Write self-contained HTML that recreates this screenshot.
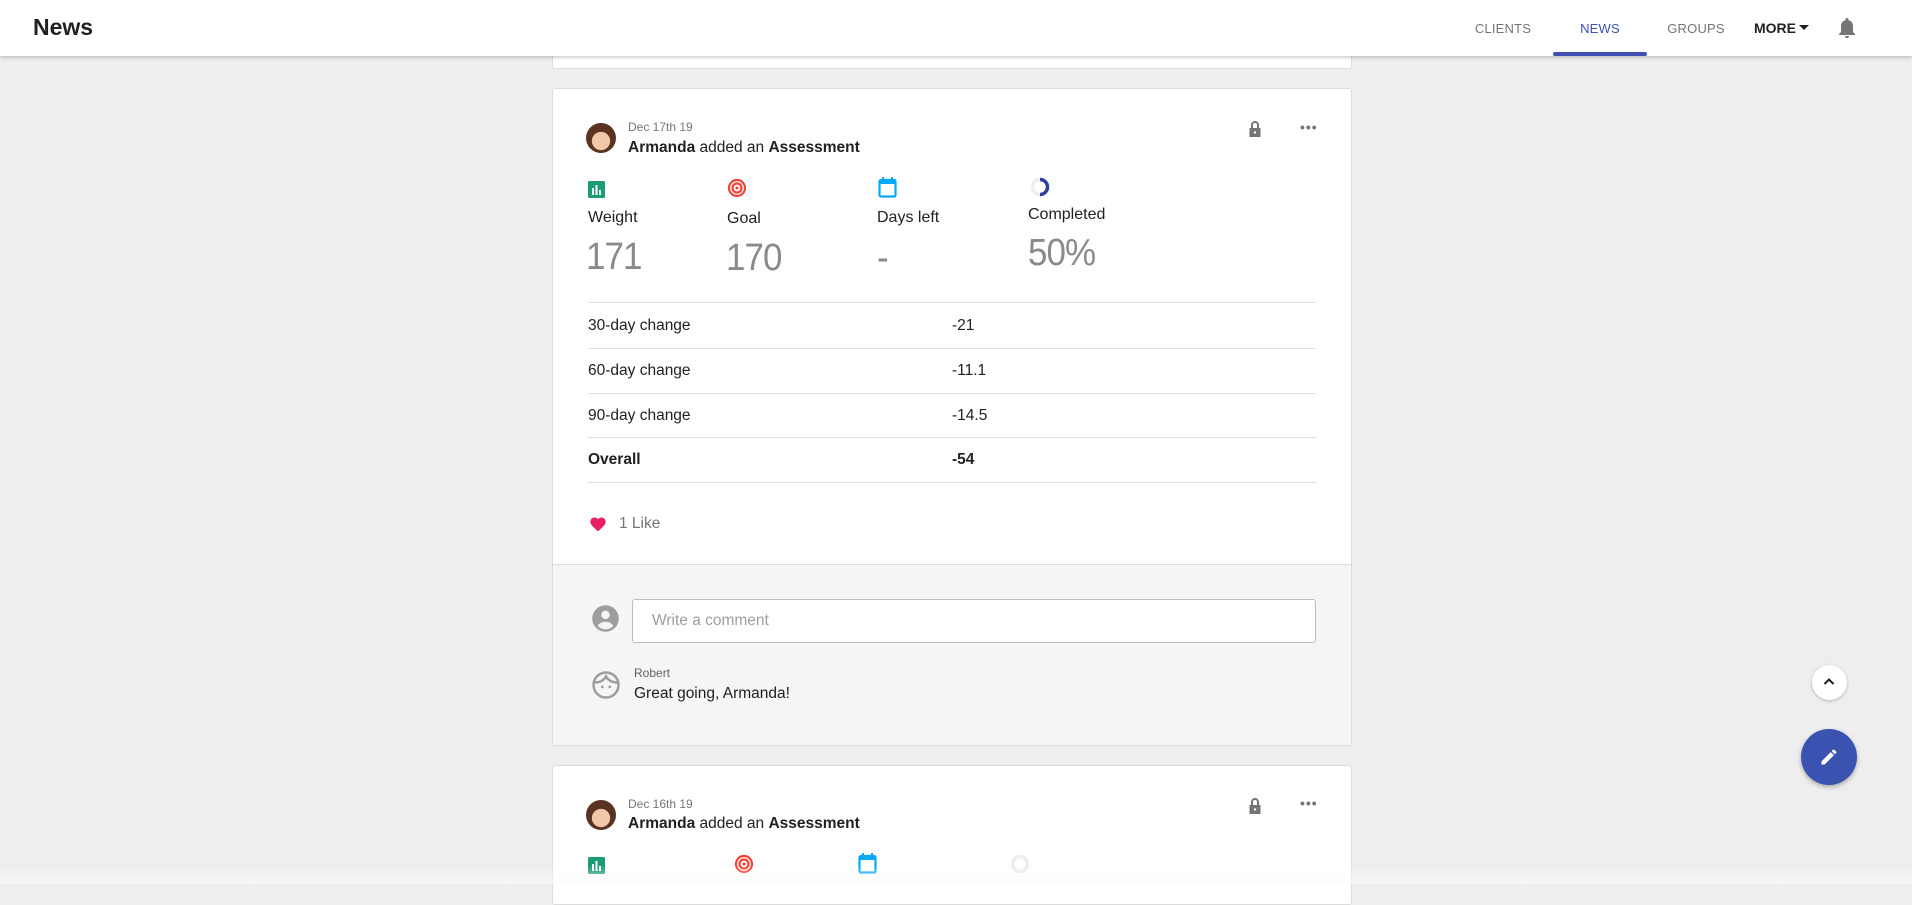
<!DOCTYPE html>
<html><head><meta charset="utf-8"><style>
*{margin:0;padding:0;box-sizing:border-box}
body{width:1912px;height:884px;overflow:hidden;background:#eeeeee;font-family:"Liberation Sans",Roboto,sans-serif;position:relative;color:#212121}
.a{position:absolute}
.hdr{left:0;top:0;width:1912px;height:56px;background:#fff;box-shadow:0 1px 4px rgba(0,0,0,.25);z-index:5}
.nav{font-size:13px;color:#757575;top:21px;transform:translateX(-50%);letter-spacing:.2px}
.card{background:#fff;border:1px solid #dcdcdc;border-radius:3px;left:552px;width:800px}
.lbl{font-size:16px;color:#212121}
.big{font-size:38px;font-weight:normal;color:#8a8a8a;letter-spacing:-1px;transform:scaleX(.92);transform-origin:left}
.line{left:588px;width:728px;height:1px;background:#e0e0e0}
.row{font-size:15.5px;color:#212121}
</style></head><body>
<div class="a hdr">
 <div class="a" style="left:33px;top:14px;font-size:23px;font-weight:bold;color:#212121">News</div>
 <div class="a nav" style="left:1503px">CLIENTS</div>
 <div class="a nav" style="left:1600px;color:#3f51b5">NEWS</div>
 <div class="a nav" style="left:1696px">GROUPS</div>
 <div class="a" style="left:1754px;top:20px;font-size:14px;font-weight:bold;color:#212121">MORE</div>
 <svg class="a" style="left:1798px;top:24px" width="12" height="8"><path d="M1 1h10L6 6z" fill="#212121"/></svg>
 <svg class="a" style="left:1837px;top:17px" width="20" height="22" viewBox="0 0 20 22"><path d="M10 1a1.5 1.5 0 0 1 1.5 1.5v.6C14.3 3.8 16 6.2 16 9v6l2 2v1H2v-1l2-2V9c0-2.8 1.7-5.2 4.5-5.9v-.6A1.5 1.5 0 0 1 10 1zM8 19h4a2 2 0 0 1-4 0z" fill="#757575"/></svg>
 <div class="a" style="left:1553px;top:52px;width:94px;height:4px;background:#3f51b5;border-radius:2px"></div>
</div>

<div class="a card" style="top:40px;height:29px"></div>

<div class="a card" style="top:88px;height:658px;overflow:hidden">
 <div class="a" style="left:0;top:475px;width:800px;height:183px;background:#f5f5f5;border-top:1px solid #dcdcdc"></div>
</div>

<div class="a" style="left:586px;top:123px;width:30px;height:30px;border-radius:50%;background:radial-gradient(circle at 50% 60%,#f1c9a8 0 38%,#5a3322 40%)"></div>
<div class="a" style="left:628px;top:120px;font-size:12px;color:#757575">Dec 17th 19</div>
<div class="a" style="left:628px;top:139px;font-size:15.5px"><b>Armanda</b> added an <b>Assessment</b></div>
<svg class="a" style="left:1248px;top:120px" width="14" height="18" viewBox="0 0 14 18"><path d="M3 8V5a4 4 0 0 1 8 0v3h1.5v9h-11V8zM5 8h4V5a2 2 0 0 0-4 0z" fill="#757575"/><circle cx="7" cy="12.5" r="1.2" fill="#fff"/></svg>
<div class="a" style="left:1300px;top:119px;font-size:14px;color:#757575;letter-spacing:1px;font-weight:bold">•••</div>

<svg class="a" style="left:588px;top:181px" width="17" height="17"><rect width="17" height="17" rx="1.5" fill="#1a9c75"/><rect x="4" y="7" width="2" height="7" fill="#fff"/><rect x="7.5" y="4" width="2" height="10" fill="#fff"/><rect x="11" y="9" width="2" height="5" fill="#fff"/></svg>
<svg class="a" style="left:727px;top:178px" width="20" height="20"><circle cx="10" cy="10" r="8" fill="none" stroke="#f44336" stroke-width="2.2"/><circle cx="10" cy="10" r="4.5" fill="none" stroke="#f44336" stroke-width="2.2"/><circle cx="10" cy="10" r="1.5" fill="#f44336"/></svg>
<svg class="a" style="left:878px;top:176px" width="19" height="22"><rect x="1.5" y="4" width="16" height="16.5" rx="1.5" fill="none" stroke="#03a9f4" stroke-width="2.2"/><rect x="1.5" y="4" width="16" height="4" fill="#03a9f4"/><rect x="4" y="1" width="2" height="4" fill="#03a9f4"/><rect x="13" y="1" width="2" height="4" fill="#03a9f4"/></svg>
<svg class="a" style="left:1030px;top:177px" width="20" height="20"><circle cx="10" cy="10" r="7.5" fill="none" stroke="#eee" stroke-width="3.5"/><path d="M10 2.5a7.5 7.5 0 0 1 0 15" fill="none" stroke="#303f9f" stroke-width="3.5"/></svg>

<div class="a lbl" style="left:588px;top:209px">Weight</div>
<div class="a lbl" style="left:727px;top:210px">Goal</div>
<div class="a lbl" style="left:877px;top:209px">Days left</div>
<div class="a lbl" style="left:1028px;top:206px">Completed</div>
<div class="a big" style="left:586px;top:236px">171</div>
<div class="a big" style="left:726px;top:237px">170</div>
<div class="a big" style="left:877px;top:237px">-</div>
<div class="a big" style="left:1028px;top:232px">50%</div>

<div class="a line" style="top:302px"></div>
<div class="a line" style="top:348px"></div>
<div class="a line" style="top:393px"></div>
<div class="a line" style="top:437px"></div>
<div class="a line" style="top:482px"></div>
<div class="a row" style="left:588px;top:317px">30-day change</div><div class="a row" style="left:952px;top:317px">-21</div>
<div class="a row" style="left:588px;top:362px">60-day change</div><div class="a row" style="left:952px;top:362px">-11.1</div>
<div class="a row" style="left:588px;top:407px">90-day change</div><div class="a row" style="left:952px;top:407px">-14.5</div>
<div class="a row" style="left:588px;top:451px;font-weight:bold">Overall</div><div class="a row" style="left:952px;top:451px;font-weight:bold">-54</div>

<svg class="a" style="left:589px;top:516px" width="18" height="16" viewBox="0 0 24 22"><path d="M12 21l-1.5-1.3C5 15 1.5 11.8 1.5 7.8 1.5 4.6 4 2 7.2 2c1.9 0 3.6.9 4.8 2.3C13.2 2.9 14.9 2 16.8 2 20 2 22.5 4.6 22.5 7.8c0 4-3.5 7.2-9 11.9z" fill="#e91e63"/></svg>
<div class="a" style="left:619px;top:515px;font-size:15.5px;color:#757575">1 Like</div>

<svg class="a" style="left:591px;top:604px" width="29" height="29" viewBox="0 0 24 24"><circle cx="12" cy="12" r="11" fill="#9e9e9e"/><circle cx="12" cy="9" r="3.5" fill="#f5f5f5"/><path d="M5.5 18c1.5-2.3 4-3.3 6.5-3.3s5 1 6.5 3.3A9 9 0 0 1 12 21a9 9 0 0 1-6.5-3z" fill="#f5f5f5"/></svg>
<div class="a" style="left:632px;top:599px;width:684px;height:44px;background:#fff;border:1px solid #bdbdbd;border-radius:3px"></div>
<div class="a" style="left:652px;top:612px;font-size:15.5px;color:#9e9e9e">Write a comment</div>
<svg class="a" style="left:591px;top:670px" width="30" height="30" viewBox="0 0 24 24"><circle cx="12" cy="12" r="10" fill="none" stroke="#9e9e9e" stroke-width="2"/><path d="M3 10c3 0 7-1 9-5 2 4 6 5 9 5" fill="none" stroke="#9e9e9e" stroke-width="2"/><circle cx="9" cy="13.5" r="1.1" fill="#9e9e9e"/><circle cx="15" cy="13.5" r="1.1" fill="#9e9e9e"/></svg>
<div class="a" style="left:634px;top:666px;font-size:12px;color:#616161">Robert</div>
<div class="a" style="left:634px;top:685px;font-size:15.5px;color:#212121">Great going, Armanda!</div>

<div class="a card" style="top:765px;height:140px"></div>
<div class="a" style="left:586px;top:800px;width:30px;height:30px;border-radius:50%;background:radial-gradient(circle at 50% 60%,#f1c9a8 0 38%,#5a3322 40%)"></div>
<div class="a" style="left:628px;top:797px;font-size:12px;color:#757575">Dec 16th 19</div>
<div class="a" style="left:628px;top:815px;font-size:15.5px"><b>Armanda</b> added an <b>Assessment</b></div>
<svg class="a" style="left:1248px;top:797px" width="14" height="18" viewBox="0 0 14 18"><path d="M3 8V5a4 4 0 0 1 8 0v3h1.5v9h-11V8zM5 8h4V5a2 2 0 0 0-4 0z" fill="#757575"/><circle cx="7" cy="12.5" r="1.2" fill="#fff"/></svg>
<div class="a" style="left:1300px;top:795px;font-size:14px;color:#757575;letter-spacing:1px;font-weight:bold">•••</div>
<svg class="a" style="left:588px;top:857px" width="17" height="17"><rect width="17" height="17" rx="1.5" fill="#1a9c75"/><rect x="4" y="7" width="2" height="7" fill="#fff"/><rect x="7.5" y="4" width="2" height="10" fill="#fff"/><rect x="11" y="9" width="2" height="5" fill="#fff"/></svg>
<svg class="a" style="left:734px;top:854px" width="20" height="20"><circle cx="10" cy="10" r="8" fill="none" stroke="#f44336" stroke-width="2.2"/><circle cx="10" cy="10" r="4.5" fill="none" stroke="#f44336" stroke-width="2.2"/><circle cx="10" cy="10" r="1.5" fill="#f44336"/></svg>
<svg class="a" style="left:858px;top:852px" width="19" height="22"><rect x="1.5" y="4" width="16" height="16.5" rx="1.5" fill="none" stroke="#03a9f4" stroke-width="2.2"/><rect x="1.5" y="4" width="16" height="4" fill="#03a9f4"/><rect x="4" y="1" width="2" height="4" fill="#03a9f4"/><rect x="13" y="1" width="2" height="4" fill="#03a9f4"/></svg>
<svg class="a" style="left:1010px;top:854px" width="20" height="20"><circle cx="10" cy="10" r="7.5" fill="none" stroke="#eee" stroke-width="3.5"/></svg>
<div class="a" style="left:0;top:866px;width:1912px;height:18px;background:linear-gradient(rgba(255,255,255,0),rgba(250,250,250,.7))"></div>

<div class="a" style="left:1812px;top:665px;width:35px;height:35px;border-radius:50%;background:#fff;box-shadow:0 1px 3px rgba(0,0,0,.25)"></div>
<svg class="a" style="left:1823px;top:677px" width="12" height="9"><path d="M1.5 7L6 2.5 10.5 7" fill="none" stroke="#212121" stroke-width="2"/></svg>
<div class="a" style="left:1801px;top:729px;width:56px;height:56px;border-radius:50%;background:#3a53b0;box-shadow:0 2px 5px rgba(0,0,0,.3)"></div>
<svg class="a" style="left:1819px;top:747px" width="20" height="20" viewBox="0 0 24 24"><path d="M3 17.25V21h3.75L17.81 9.94l-3.75-3.75zM20.71 7.04a1 1 0 0 0 0-1.41l-2.34-2.34a1 1 0 0 0-1.41 0l-1.83 1.83 3.75 3.75z" fill="#fff"/></svg>
</body></html>
